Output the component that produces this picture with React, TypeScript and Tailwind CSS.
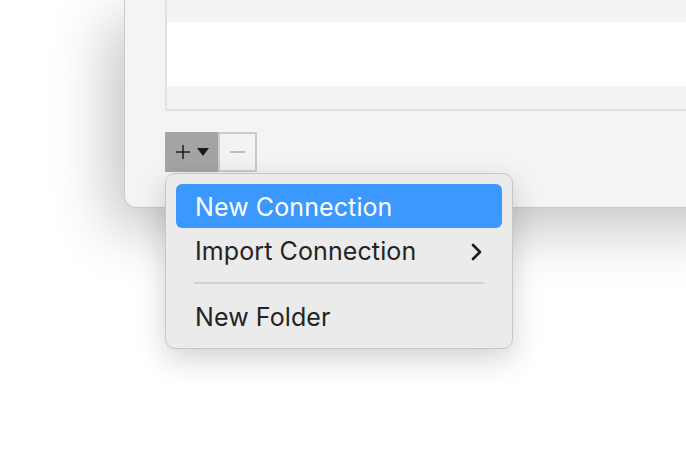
const font = { fontFamily: 'Inter, "Noto Sans", sans-serif' };

export default function App() {
  return (
    <div className="relative h-[460px] w-[686px] overflow-hidden bg-white" style={font}>
      <div className="pl-[124px]">
        {/* window */}
        <div className="h-[208px] w-[640px] rounded-bl-[12px] border-b border-l border-[#c9c9c9] bg-[#f4f4f4] pl-[40px] shadow-[-14px_20px_60px_rgba(0,0,0,0.24)]">
          <div className="flex h-[111px] flex-col border-b-2 border-l-2 border-[#e1e1e1]">
            <div className="h-[22px] bg-[#f2f3f3]" />
            <div className="h-[64px] bg-white" />
            <div className="flex-1 bg-[#f2f3f3]" />
          </div>
          <div className="mt-[21px] flex h-[40px]">
            <div className="flex w-[53px] items-center justify-center gap-[7px] bg-[#a4a4a4] pl-[1px]">
              <svg width="14" height="14" viewBox="0 0 14 14">
                <path d="M7 0v14M0 7h14" stroke="#222" strokeWidth="1.6" />
              </svg>
              <svg width="12" height="8" viewBox="0 0 12 8">
                <path d="M0 0h12L6 8z" fill="#1a1a1a" />
              </svg>
            </div>
            <div className="flex w-[39px] items-center justify-center border-2 border-[#cbcbcb] bg-[#f3f3f3]">
              <div className="h-[1.5px] w-[15px] bg-[#bcbcbc]" />
            </div>
          </div>
        </div>
      </div>

      {/* dropdown menu */}
      <div className="absolute left-[165px] top-[173px] w-[348px] rounded-[10px] border border-[#c6c6c6] bg-[#ebebeb] p-[10px] text-[25px] tracking-[0.1px] shadow-[0_10px_30px_rgba(0,0,0,0.18)]">
        <div className="flex h-[44px] items-center rounded-[6px] bg-[#3a98fe] px-[19px] pt-[4px] text-white">
          New Connection
        </div>
        <div className="flex h-[44px] items-center justify-between pl-[19px] pr-[20px] pt-[3px] text-[#232323]">
          <span>Import Connection</span>
          <svg width="11" height="18" viewBox="0 0 11 18">
            <path d="M2 2l7 7-7 7" fill="none" stroke="#1c1c1c" strokeWidth="2.6" strokeLinecap="round" strokeLinejoin="round" />
          </svg>
        </div>
        <div className="mx-[18px] my-[10px] h-[2px] bg-[#d2d2d2]" />
        <div className="flex h-[44px] items-center px-[19px] pt-[3px] text-[#232323]">
          New Folder
        </div>
      </div>
    </div>
  );
}
